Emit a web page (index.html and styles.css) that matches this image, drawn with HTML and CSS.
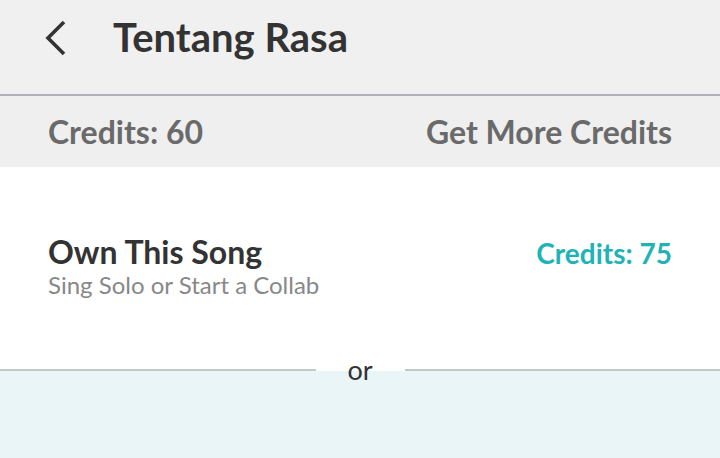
FILE: index.html
```html
<!DOCTYPE html>
<html>
<head>
<meta charset="utf-8">
<link rel="stylesheet" href="styles.css">
</head>
<body>
<div class="page">
  <header class="topbar">
    <svg class="back" width="24" height="36" viewBox="0 0 24 36"><path d="M20 2 L4 18 L20 34" fill="none" stroke="#333" stroke-width="3.6" stroke-linecap="butt" stroke-linejoin="miter"/></svg>
    <h1 class="title">Tentang Rasa</h1>
  </header>
  <div class="creditbar">
    <span>Credits: 60</span>
    <span>Get More Credits</span>
  </div>
  <section class="own">
    <div class="own-text">
      <div class="own-title">Own This Song</div>
      <div class="own-sub">Sing Solo or Start a Collab</div>
    </div>
    <div class="own-price">Credits: 75</div>
  </section>
  <div class="divider">
    <span class="line"></span>
    <span class="or">or</span>
    <span class="line"></span>
  </div>
  <div class="lower"></div>
</div>
</body>
</html>
```
FILE: styles.css
```css
html, body { margin: 0; padding: 0; }
body { font-family: Lato, "Open Sans", sans-serif; background: #eaf5f8; }
.page { width: 720px; height: 458px; overflow: hidden; display: flex; flex-direction: column; }
.topbar { height: 94px; background: #f0f0f0; border-bottom: 2px solid #b3b0bd; display: flex; align-items: center; padding-left: 44px; }
.back { margin-top: -18px; }
.title { margin: -20px 0 0 45px; font-size: 40px; font-weight: 700; color: #333333; }
.creditbar { height: 71px; background: #efefef; display: flex; justify-content: space-between; align-items: center; padding: 0 48px; font-size: 32px; font-weight: 700; color: #6a6a6a; }
.creditbar span { margin-top: -1px; }
.own { height: 202px; background: #ffffff; display: flex; justify-content: space-between; align-items: flex-start; padding: 66px 48px 0; box-sizing: border-box; }
.own-title { font-size: 32px; font-weight: 700; color: #333333; line-height: 38px; }
.own-sub { font-size: 24px; color: #888888; line-height: 30px; margin-top: -1px; }
.own-price { font-size: 28px; font-weight: 700; color: #1fb3b6; line-height: 38px; margin-top: 1px; }
.divider { height: 2px; display: flex; align-items: center; background: #eaf5f8; position: relative; z-index: 1; }
.line { flex: 1; height: 2px; background: #c4c6c9; }
.or { width: 89px; height: 2px; background: #ffffff; font-size: 27px; color: #333333; text-align: center; line-height: 2px; }
.lower { flex: 1; background: #eaf5f8; }
```
